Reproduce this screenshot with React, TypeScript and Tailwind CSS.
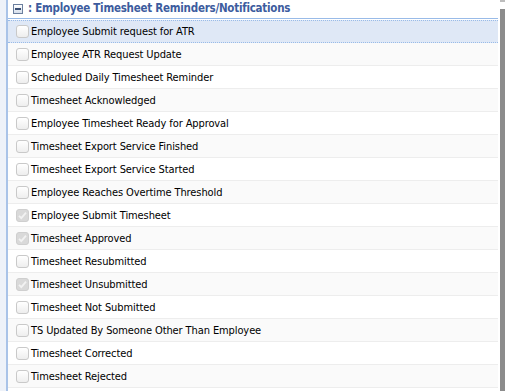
import React from "react";

const items: { label: string; checked?: boolean }[] = [
  { label: "Employee Submit request for ATR" },
  { label: "Employee ATR Request Update" },
  { label: "Scheduled Daily Timesheet Reminder" },
  { label: "Timesheet Acknowledged" },
  { label: "Employee Timesheet Ready for Approval" },
  { label: "Timesheet Export Service Finished" },
  { label: "Timesheet Export Service Started" },
  { label: "Employee Reaches Overtime Threshold" },
  { label: "Employee Submit Timesheet", checked: true },
  { label: "Timesheet Approved", checked: true },
  { label: "Timesheet Resubmitted" },
  { label: "Timesheet Unsubmitted", checked: true },
  { label: "Timesheet Not Submitted" },
  { label: "TS Updated By Someone Other Than Employee" },
  { label: "Timesheet Corrected" },
  { label: "Timesheet Rejected" },
];

function Box({ checked }: { checked?: boolean }) {
  if (checked) {
    return (
      <div className="w-[13px] h-[13px] rounded-[3px] border border-[#cfcfcf] bg-[#d9d9d9] flex items-center justify-center shrink-0">
        <svg width="11" height="11" viewBox="0 0 11 11">
          <path d="M2 5.8 L4.3 8.2 L9 2.6" fill="none" stroke="#f2f2f2" strokeWidth="1.8" />
        </svg>
      </div>
    );
  }
  return (
    <div className="w-[13px] h-[13px] rounded-[3px] border border-[#c9c9c9] bg-gradient-to-b from-[#ffffff] to-[#eeeeee] shrink-0" />
  );
}

export default function App() {
  return (
    <div
      className="w-[505px] h-[391px] overflow-hidden flex bg-white"
      style={{ fontFamily: '"DejaVu Sans Condensed", "DejaVu Sans", sans-serif' }}
    >
      <div className="w-[6px] bg-[#eef2f9] shrink-0" />
      <div className="w-[2px] bg-[#a9c3e8] shrink-0" />
      <div className="flex-1 flex flex-col min-w-0">
        <div className="h-[19px] flex items-center pl-[5px] border-b border-[#99bbe8] shrink-0">
          <div className="w-[10px] h-[10px] border border-[#6b7f9e] bg-gradient-to-b from-[#ffffff] to-[#d6dfec] flex items-center justify-center shrink-0">
            <div className="w-[6px] h-[2px] bg-[#3a4f73]" />
          </div>
          <span className="ml-[5px] text-[11.5px] font-bold text-[#3d5c9e] leading-none whitespace-nowrap tracking-[-0.25px]">
            : Employee Timesheet Reminders/Notifications
          </span>
        </div>
        <div className="mt-[1px] flex flex-col">
          {items.map((it, i) => {
            const sel = i === 0;
            const cls = sel
              ? "h-[23px] flex items-center pl-[8px] bg-[#dfe8f6] border-y border-dotted border-[#99bbe8]"
              : i % 2 === 1
              ? "h-[23px] flex items-center pl-[8px] bg-[#fafafa] border-b border-[#ededed]"
              : "h-[23px] flex items-center pl-[8px] bg-white border-b border-[#ededed]";
            return (
              <div key={i} className={cls}>
                <Box checked={it.checked} />
                <span className="ml-[2px] text-[11px] text-black whitespace-nowrap leading-none tracking-[-0.1px]">{it.label}</span>
              </div>
            );
          })}
        </div>
      </div>
      <div className="w-[2px] shrink-0" />
      <div className="w-[5px] shrink-0 flex flex-col">
        <div className="h-[2px] bg-[#bdbdbd]" />
        <div className="h-[7px]" />
        <div className="flex-1 bg-[#8c8c8c]" />
      </div>
    </div>
  );
}
